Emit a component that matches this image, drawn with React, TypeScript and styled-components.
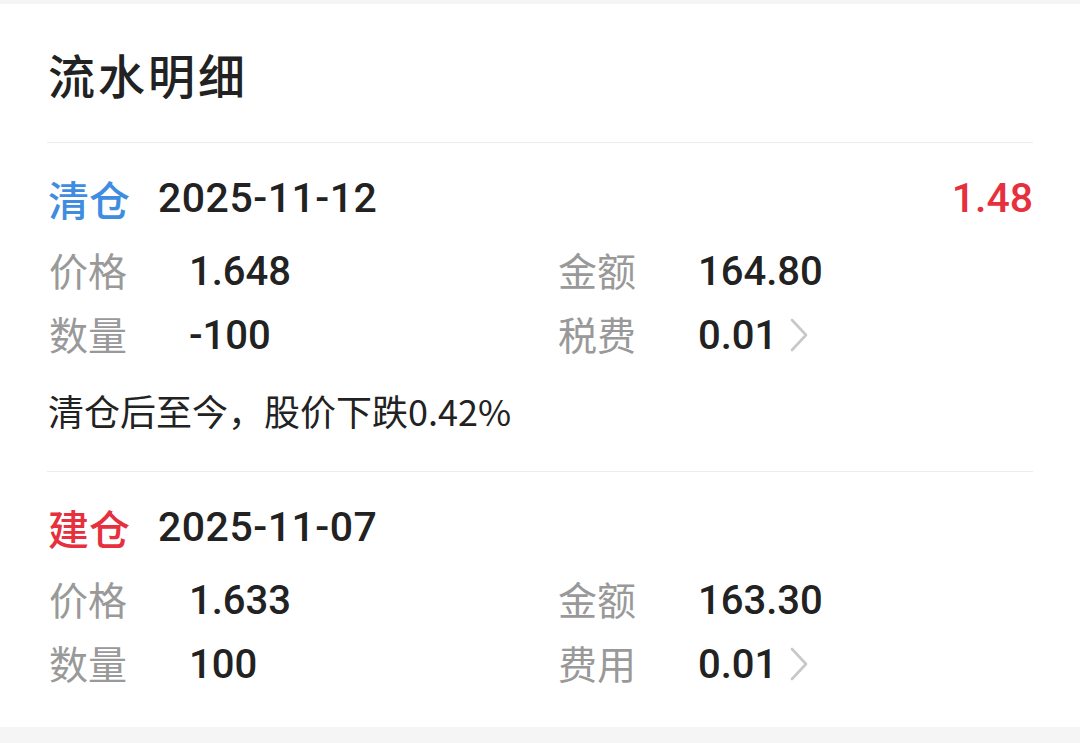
import React from "react";
import styled, { createGlobalStyle } from "styled-components";

const Global = createGlobalStyle`
  html, body { margin: 0; padding: 0; }
  body {
    background: #f5f5f5;
    font-family: "Roboto", "Noto Sans CJK SC", sans-serif;
    color: #222;
  }
`;

const Card = styled.div`
  margin-top: 4px;
  background: #fff;
  padding: 0 47px;
`;

const Title = styled.h1`
  margin: 0;
  height: 138px;
  display: flex;
  align-items: center;
  font-family: "Noto Sans CJK SC", sans-serif;
  font-size: 47px;
  font-weight: 500;
  letter-spacing: 3px;
  padding-left: 1px;
  color: #222;
`;

const Entry = styled.section`
  border-top: 1px solid #ececec;
  padding: 24px 0 31px;
`;

const Header = styled.div`
  display: flex;
  align-items: center;
  height: 62px;
`;

const Tag = styled.span<{ $tone: "blue" | "red" }>`
  font-family: "Noto Sans CJK SC", sans-serif;
  font-size: 41px;
  font-weight: 500;
  color: ${(p) => (p.$tone === "blue" ? "#3f8de0" : "#e6303e")};
  margin-left: 1px;
  margin-right: 28px;
`;

const DateText = styled.span`
  font-size: 41px;
  font-weight: 500;
  letter-spacing: 0.5px;
  color: #222;
  flex: 1;
`;

const Amount = styled.span`
  font-size: 41px;
  font-weight: 500;
  color: #e6303e;
`;

const Grid = styled.div`
  display: grid;
  grid-template-columns: 509px 1fr;
  grid-auto-rows: 64px;
  margin-top: 10px;
`;

const Cell = styled.div`
  display: flex;
  align-items: center;
`;

const Label = styled.span`
  width: 142px;
  padding-left: 2px;
  box-sizing: border-box;
  font-family: "Noto Sans CJK SC", sans-serif;
  font-size: 39px;
  color: #999;
  position: relative;
  top: -2px;
`;

const Value = styled.span`
  font-size: 40px;
  font-weight: 500;
  color: #222;
`;

const Chevron = styled.svg`
  margin-left: 13px;
  flex: none;
`;

const Note = styled.p`
  margin: 13px 0 0;
  height: 60px;
  display: flex;
  align-items: center;
  padding-left: 1px;
  font-family: "Noto Sans CJK SC", sans-serif;
  font-size: 36px;
  color: #222;
`;

const Arrow = () => (
  <Chevron width="18" height="34" viewBox="0 0 18 34">
    <polyline
      points="2,2 16,17 2,32"
      fill="none"
      stroke="#c8c8c8"
      strokeWidth="2.6"
      strokeLinecap="round"
      strokeLinejoin="round"
    />
  </Chevron>
);

type Item = { label: string; value: string; arrow?: boolean };

const Field = ({ label, value, arrow }: Item) => (
  <Cell>
    <Label>{label}</Label>
    <Value>{value}</Value>
    {arrow && <Arrow />}
  </Cell>
);

export default function App() {
  return (
    <>
      <Global />
      <Card>
        <Title>流水明细</Title>
        <Entry>
          <Header>
            <Tag $tone="blue">清仓</Tag>
            <DateText>2025-11-12</DateText>
            <Amount>1.48</Amount>
          </Header>
          <Grid>
            <Field label="价格" value="1.648" />
            <Field label="金额" value="164.80" />
            <Field label="数量" value="-100" />
            <Field label="税费" value="0.01" arrow />
          </Grid>
          <Note>清仓后至今，股价下跌0.42%</Note>
        </Entry>
        <Entry>
          <Header>
            <Tag $tone="red">建仓</Tag>
            <DateText>2025-11-07</DateText>
          </Header>
          <Grid>
            <Field label="价格" value="1.633" />
            <Field label="金额" value="163.30" />
            <Field label="数量" value="100" />
            <Field label="费用" value="0.01" arrow />
          </Grid>
        </Entry>
      </Card>
    </>
  );
}
